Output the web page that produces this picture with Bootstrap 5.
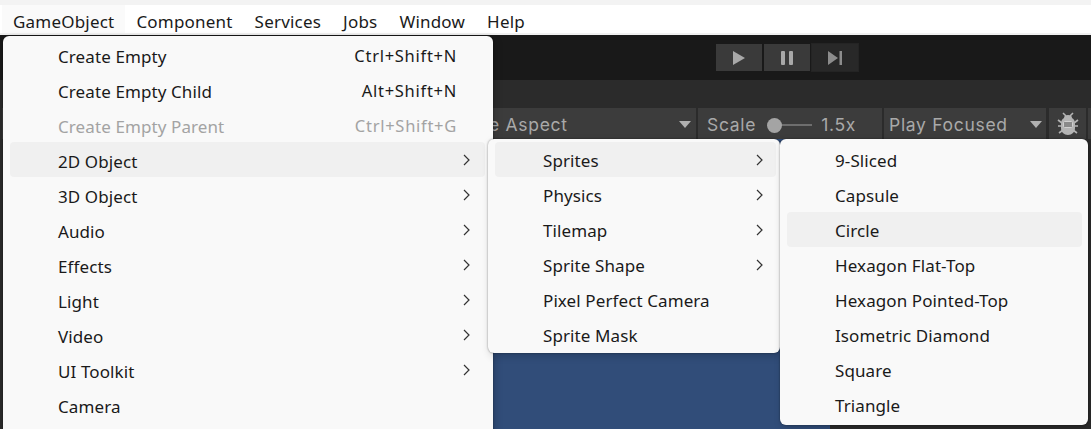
<!DOCTYPE html>
<html lang="en">
<head>
<meta charset="utf-8">
<title>Unity GameObject menu</title>
<link href="https://cdn.jsdelivr.net/npm/bootstrap@5.3.0/dist/css/bootstrap.min.css" rel="stylesheet">
<style>
html,body{height:429px;overflow:hidden;background:#2b2b2b}
.app-stage{position:relative;width:1091px;height:429px;overflow:hidden;font-family:"Noto Sans","Open Sans",sans-serif}
.top-strip{height:5px;background:#f3f3f3}
.menu-strip{height:30px;background:#fff;padding-left:2px;border-bottom:2px solid #f0f0f0;font-size:17px;color:#1a1a1a}
.menu-title{padding:0 11px;height:28px;line-height:34px;letter-spacing:.2px}
.menu-title.is-open{background:#fafafa}
.play-strip{height:45px;background:#191919;padding-left:716px;gap:2px;padding-top:9px}
.play-btn{width:46px;height:27px;background:#3a3a3a}
.play-btn.is-dim{background:#282828;outline:1px solid #242424}
.tab-strip{height:28px;background:#2b2b2b}
.tool-strip{height:31px;background:#2b2b2b;padding-left:2px;gap:2px;color:#a9a9a9;font-family:"Inter",sans-serif;font-size:17.5px;letter-spacing:.7px}
.tool-seg{height:31px;background:#3c3c3c;padding-top:2px}
.tool-label{padding-top:2px}
.tool-aspect{width:694px;padding-right:5px}
.tool-aspect-text{margin-left:487px}
.tool-scale{width:184px;padding-left:9px}
.tool-focus{width:162px;padding-left:5px;padding-right:4px;margin-right:1px}
.tool-bug{width:37px;justify-content:center;padding-top:0}
.tool-end{width:3px}
.caret-down{width:0;height:0;border-left:6px solid transparent;border-right:6px solid transparent;border-top:7px solid #b0b0b0}
.scale-track{width:38px;height:2px;background:#6e6e6e;margin:0 9px 0 18px;position:relative}
.scale-knob{position:absolute;left:-7px;top:-6px;width:15px;height:15px;border-radius:50%;background:#a4a4a4}
.scene-area{height:290px;background:#314d79}
.scene-left{width:3px;background:#2b2b2b}
.scene-dark{width:261px;background:#2b2b2b}
.popup-menu{position:absolute;background:#f9f9f9;border-radius:6px;font-size:17px;color:#1a1a1a;box-shadow:0 0 2px rgba(0,0,0,.45),2px 3px 8px rgba(0,0,0,.18)}
.popup-main{left:3px;top:36px;width:490px;height:400px;padding:1px 8px 0 7px}
.popup-sprite{left:488px;top:139px;width:292px;height:214px;padding:3px 4px 0 7px}
.popup-shape{left:780px;top:139px;width:308px;height:286px;padding:3px 6px 0 7px}
.popup-row{height:35px;border-radius:4px;padding-left:48px;letter-spacing:.1px;white-space:nowrap;padding-top:3px}
.popup-main .popup-row{padding-right:28px;padding-top:4px}
.popup-row.is-active{background:#f0f0f0}
.popup-row.is-off{color:#a3a3a3}
.chev{width:7px;height:12px;flex:none;margin-top:-4px;margin-right:-13px}
.popup-sprite .popup-row{padding-right:13px}
.popup-sprite .chev{margin-top:-3px;margin-right:0}
.hot-key{font-size:16.5px;letter-spacing:.72px}
</style>
</head>
<body>
<div class="app-stage">
  <div class="top-strip"></div>
  <div class="menu-strip d-flex">
    <div class="menu-title is-open">GameObject</div>
    <div class="menu-title">Component</div>
    <div class="menu-title">Services</div>
    <div class="menu-title">Jobs</div>
    <div class="menu-title">Window</div>
    <div class="menu-title">Help</div>
  </div>
  <div class="play-strip d-flex">
    <div class="play-btn d-flex align-items-center justify-content-center"><svg width="14" height="16" viewBox="0 0 14 16"><path d="M1 1l12 7-12 7z" fill="#a8a8a8"/></svg></div>
    <div class="play-btn d-flex align-items-center justify-content-center"><svg width="14" height="16" viewBox="0 0 14 16"><rect x="1" y="1" width="4" height="14" rx="1" fill="#a8a8a8"/><rect x="9" y="1" width="4" height="14" rx="1" fill="#a8a8a8"/></svg></div>
    <div class="play-btn is-dim d-flex align-items-center justify-content-center"><svg width="16" height="16" viewBox="0 0 16 16"><path d="M1 1l10 7-10 7z" fill="#8c8c8c"/><rect x="12.500" y="1" width="2.500" height="14" fill="#8c8c8c"/></svg></div>
  </div>
  <div class="tab-strip"></div>
  <div class="tool-strip d-flex">
    <div class="tool-seg tool-aspect d-flex align-items-center"><span class="tool-label tool-aspect-text me-auto">e Aspect</span><span class="caret-down"></span></div>
    <div class="tool-seg tool-scale d-flex align-items-center"><span class="tool-label">Scale</span><span class="scale-track"><span class="scale-knob"></span></span><span class="tool-label">1.5x</span></div>
    <div class="tool-seg tool-focus d-flex align-items-center justify-content-between"><span class="tool-label">Play Focused</span><span class="caret-down"></span></div>
    <div class="tool-seg tool-bug d-flex align-items-center">
      <svg width="22" height="24" viewBox="0 0 22 24" fill="none"><g stroke="#b4b4b4" stroke-width="1.600"><path d="M6 1l3 3M16 1l-3 3M1 8l4 3M21 8l-4 3M1 14h4M21 14h-4M2 21l4-3M20 21l-4-3"/></g><path d="M7 6a4 3 0 0 1 8 0c2 1 3 3 3 6v4c0 4-3 7-7 7s-7-3-7-7v-4c0-3 1-5 3-6z" fill="#b4b4b4"/><rect x="6.500" y="9.500" width="9" height="6" rx="1" fill="#8a8a8a" stroke="#d0d0d0"/></svg>
    </div>
    <div class="tool-seg tool-end"></div>
  </div>
  <div class="scene-area d-flex justify-content-between"><div class="scene-left"></div><div class="scene-dark"></div></div>

  <div class="popup-menu popup-main">
    <div class="popup-row d-flex align-items-center justify-content-between"><span>Create Empty</span><span class="hot-key">Ctrl+Shift+N</span></div>
    <div class="popup-row d-flex align-items-center justify-content-between"><span>Create Empty Child</span><span class="hot-key">Alt+Shift+N</span></div>
    <div class="popup-row is-off d-flex align-items-center justify-content-between"><span>Create Empty Parent</span><span class="hot-key">Ctrl+Shift+G</span></div>
    <div class="popup-row is-active d-flex align-items-center justify-content-between"><span>2D Object</span><svg class="chev" viewBox="0 0 7 12" fill="none"><path d="M1 1l5 5-5 5" stroke="#333" stroke-width="1.200"/></svg></div>
    <div class="popup-row d-flex align-items-center justify-content-between"><span>3D Object</span><svg class="chev" viewBox="0 0 7 12" fill="none"><path d="M1 1l5 5-5 5" stroke="#333" stroke-width="1.200"/></svg></div>
    <div class="popup-row d-flex align-items-center justify-content-between"><span>Audio</span><svg class="chev" viewBox="0 0 7 12" fill="none"><path d="M1 1l5 5-5 5" stroke="#333" stroke-width="1.200"/></svg></div>
    <div class="popup-row d-flex align-items-center justify-content-between"><span>Effects</span><svg class="chev" viewBox="0 0 7 12" fill="none"><path d="M1 1l5 5-5 5" stroke="#333" stroke-width="1.200"/></svg></div>
    <div class="popup-row d-flex align-items-center justify-content-between"><span>Light</span><svg class="chev" viewBox="0 0 7 12" fill="none"><path d="M1 1l5 5-5 5" stroke="#333" stroke-width="1.200"/></svg></div>
    <div class="popup-row d-flex align-items-center justify-content-between"><span>Video</span><svg class="chev" viewBox="0 0 7 12" fill="none"><path d="M1 1l5 5-5 5" stroke="#333" stroke-width="1.200"/></svg></div>
    <div class="popup-row d-flex align-items-center justify-content-between"><span>UI Toolkit</span><svg class="chev" viewBox="0 0 7 12" fill="none"><path d="M1 1l5 5-5 5" stroke="#333" stroke-width="1.200"/></svg></div>
    <div class="popup-row d-flex align-items-center justify-content-between"><span>Camera</span></div>
  </div>

  <div class="popup-menu popup-sprite">
    <div class="popup-row is-active d-flex align-items-center justify-content-between"><span>Sprites</span><svg class="chev" viewBox="0 0 7 12" fill="none"><path d="M1 1l5 5-5 5" stroke="#333" stroke-width="1.200"/></svg></div>
    <div class="popup-row d-flex align-items-center justify-content-between"><span>Physics</span><svg class="chev" viewBox="0 0 7 12" fill="none"><path d="M1 1l5 5-5 5" stroke="#333" stroke-width="1.200"/></svg></div>
    <div class="popup-row d-flex align-items-center justify-content-between"><span>Tilemap</span><svg class="chev" viewBox="0 0 7 12" fill="none"><path d="M1 1l5 5-5 5" stroke="#333" stroke-width="1.200"/></svg></div>
    <div class="popup-row d-flex align-items-center justify-content-between"><span>Sprite Shape</span><svg class="chev" viewBox="0 0 7 12" fill="none"><path d="M1 1l5 5-5 5" stroke="#333" stroke-width="1.200"/></svg></div>
    <div class="popup-row d-flex align-items-center"><span>Pixel Perfect Camera</span></div>
    <div class="popup-row d-flex align-items-center"><span>Sprite Mask</span></div>
  </div>

  <div class="popup-menu popup-shape">
    <div class="popup-row d-flex align-items-center"><span>9-Sliced</span></div>
    <div class="popup-row d-flex align-items-center"><span>Capsule</span></div>
    <div class="popup-row is-active d-flex align-items-center"><span>Circle</span></div>
    <div class="popup-row d-flex align-items-center"><span>Hexagon Flat-Top</span></div>
    <div class="popup-row d-flex align-items-center"><span>Hexagon Pointed-Top</span></div>
    <div class="popup-row d-flex align-items-center"><span>Isometric Diamond</span></div>
    <div class="popup-row d-flex align-items-center"><span>Square</span></div>
    <div class="popup-row d-flex align-items-center"><span>Triangle</span></div>
  </div>
</div>
<script src="https://cdn.jsdelivr.net/npm/bootstrap@5.3.0/dist/js/bootstrap.bundle.min.js"></script>
</body>
</html>
